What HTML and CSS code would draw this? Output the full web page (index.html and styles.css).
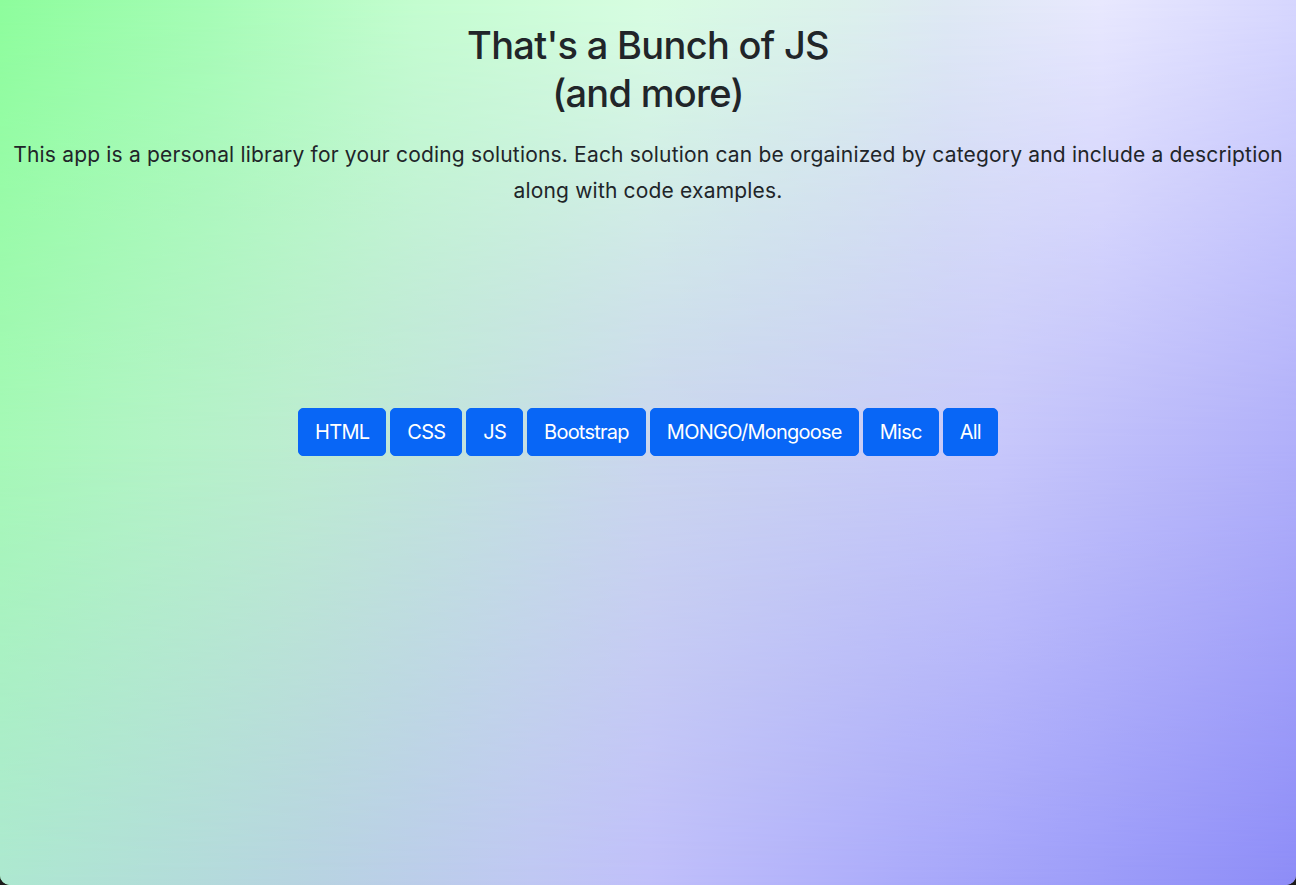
FILE: index.html
```html
<!DOCTYPE html>
<html lang="en">
<head>
<meta charset="utf-8">
<title>That's a Bunch of JS</title>
<link rel="stylesheet" href="styles.css">
</head>
<body>
<div class="page">
  <header class="intro">
    <h1 class="title">That's a Bunch of JS<br>(and more)</h1>
    <p class="lead">This app is a personal library for your coding solutions. Each solution can be orgainized by category and include a description along with code examples.</p>
  </header>
  <nav class="filters">
    <button class="btn">HTML</button>
    <button class="btn">CSS</button>
    <button class="btn">JS</button>
    <button class="btn">Bootstrap</button>
    <button class="btn">MONGO/Mongoose</button>
    <button class="btn">Misc</button>
    <button class="btn">All</button>
  </nav>
</div>
</body>
</html>
```
FILE: styles.css
```css
html {
  background: #1c1c1c;
}
body {
  margin: 0;
  font-family: Inter, "Noto Sans", "Liberation Sans", sans-serif;
  color: #212529;
}
.page {
  position: relative;
  overflow: hidden;
  height: 885px;
  box-sizing: border-box;
  border-radius: 0 0 10px 10px;
  padding-top: 21px;
  background: linear-gradient(to right, #a6f9b7 0%, #b3f4c6 12%, #bdedd1 23%, #cbd7ee 50%, #c8c8fb 77%, #b1b0fa 100%);
}
.page::before,
.page::after {
  content: "";
  position: absolute;
  inset: 0;
  z-index: 0;
}
.page::before {
  background: linear-gradient(to right, #8dfd9c 0%, #a5fcb5 16%, #c3fdcf 32%, #d7fde1 50%, #dcf0ec 66%, #dee9f3 73%, #e8e8fe 85%, #d6d6fe 100%);
  -webkit-mask-image: linear-gradient(to bottom, #000 0%, transparent 50%);
  mask-image: linear-gradient(to bottom, #000 0%, transparent 50%);
}
.page::after {
  background: linear-gradient(to right, #ade8d0 0%, #b8d2e2 25%, #bfc7f3 41%, #c0bffa 50%, #aaaafa 70%, #9c9cf9 85%, #8d8cf7 100%);
  -webkit-mask-image: linear-gradient(to bottom, transparent 50%, #000 100%);
  mask-image: linear-gradient(to bottom, transparent 50%, #000 100%);
}
.intro,
.filters {
  position: relative;
  z-index: 1;
}
.intro {
  text-align: center;
}
.title {
  margin: 0 0 20px;
  font-size: 38px;
  font-weight: 500;
  line-height: 48px;
  letter-spacing: -0.7px;
}
.lead {
  margin: 0;
  font-size: 21px;
  line-height: 36px;
  letter-spacing: 0.18px;
}
.filters {
  display: flex;
  justify-content: center;
  gap: 4px;
  margin-top: 199px;
}
.btn {
  font-family: inherit;
  font-size: 20px;
  line-height: 30px;
  padding: 8px 16px;
  border: 1px solid #0866f6;
  border-radius: 5px;
  background: #0866f6;
  color: #fff;
  letter-spacing: -0.75px;
}
```
